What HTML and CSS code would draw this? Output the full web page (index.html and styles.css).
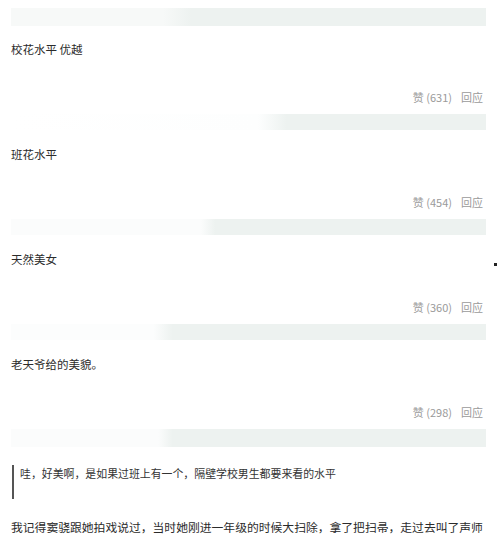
FILE: index.html
```html
<!DOCTYPE html>
<html lang="zh-CN">
<head>
    <meta charset="UTF-8">
    <meta name="viewport" content="width=device-width, initial-scale=1.0">
    <title>评论</title>
    <link rel="stylesheet" href="styles.css">
</head>
<body>
    <div class="page">
        <div class="bar bar-a"></div>
        <div class="comment first">
            <p class="text">校花水平 优越</p>
            <div class="meta"><span>赞 (631)</span><span>回应</span></div>
        </div>

        <div class="bar bar-b"></div>
        <div class="comment">
            <p class="text">班花水平</p>
            <div class="meta"><span>赞 (454)</span><span>回应</span></div>
        </div>

        <div class="bar bar-c"></div>
        <div class="comment">
            <p class="text">天然美女</p>
            <div class="meta"><span>赞 (360)</span><span>回应</span></div>
        </div>

        <div class="bar bar-d"></div>
        <div class="comment">
            <p class="text">老天爷给的美貌。</p>
            <div class="meta"><span>赞 (298)</span><span>回应</span></div>
        </div>

        <div class="bar bar-e"></div>

        <blockquote class="quote">哇，好美啊，是如果过班上有一个，隔壁学校男生都要来看的水平</blockquote>

        <p class="story">我记得窦骁跟她拍戏说过，当时她刚进一年级的时候大扫除，拿了把扫帚，走过去叫了声师傅，她是一个很认真的人，也很有礼貌，大家都很喜欢她</p>
    </div>
    <span class="dot"></span>
</body>
</html>
```

FILE: styles.css
```css
body {
    margin: 0;
    background: #fff;
    font-family: "Noto Sans CJK SC", "Noto Sans", sans-serif;
    color: #333;
}
.page {
    padding: 8px 13px 0 11px;
}
.bar {
    height: 16px;
    background-color: #edf2f0;
}
.bar-a {
    height: 18px;
    background: linear-gradient(90deg, #f7f9f8 0, #f7f9f8 32%, #edf2f0 38%, #edf2f0 100%);
}
.bar-b {
    background: linear-gradient(90deg, #fff 0, #fdfefe 52%, #edf2f0 58%, #edf2f0 100%);
}
.bar-c {
    background: linear-gradient(90deg, #fbfcfc 0, #fbfcfc 40%, #edf2f0 43%, #edf2f0 100%);
}
.bar-d {
    background: linear-gradient(90deg, #fcfdfd 0, #fcfdfd 30%, #edf2f0 34%, #edf2f0 100%);
}
.bar-e {
    height: 18px;
    background: linear-gradient(90deg, #fbfcfc 0, #fbfcfc 31%, #edf2f0 34%, #edf2f0 100%);
}
.comment {
    padding: 16px 0 9px;
}
.comment.first {
    padding-top: 15px;
}
.text {
    margin: 0;
    font-size: 11.5px;
    line-height: 16px;
    color: #2b2b2b;
}
.meta {
    margin-top: 32px;
    display: flex;
    justify-content: flex-end;
    gap: 9px;
    font-size: 11px;
    line-height: 16px;
    color: #9a9a9a;
    padding-right: 3px;
}
.quote {
    margin: 18px 0 0 1px;
    padding: 0 0 18px 6px;
    border-left: 2px solid #555;
    font-size: 10.9px;
    line-height: 16px;
    color: #333;
}
.story {
    margin: 18px 0 0;
    font-size: 11.8px;
    line-height: 20px;
    color: #2b2b2b;
}
.dot {
    position: absolute;
    left: 494px;
    top: 263px;
    width: 3px;
    height: 3px;
    background: #222;
}
```
